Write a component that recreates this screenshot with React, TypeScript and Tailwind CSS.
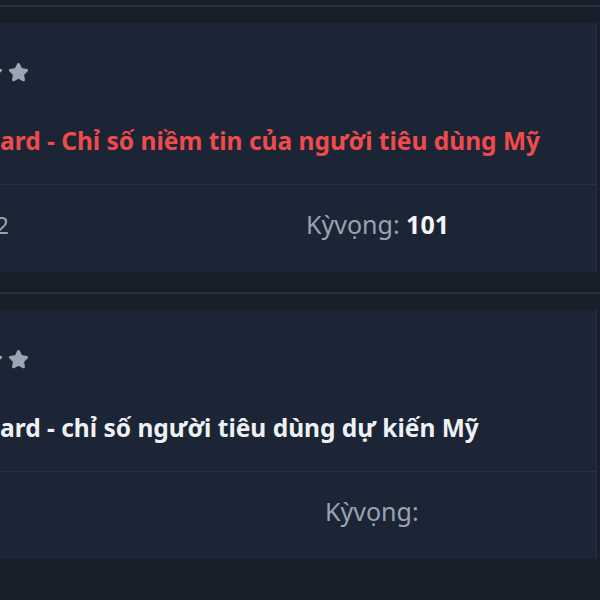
import { Star } from "lucide-react";

type Item = {
    hidden: string;
    title: string;
    red: boolean;
    prev: string;
    expect: string;
    expectX: string;
};

const items: Item[] = [
    {
        hidden: "Conference Bo",
        title: "ard - Chỉ số niềm tin của người tiêu dùng Mỹ",
        red: true,
        prev: "Trước: 102",
        expect: "101",
        expectX: "ml-[306px]",
    },
    {
        hidden: "Conference Bo",
        title: "ard - chỉ số người tiêu dùng dự kiến Mỹ",
        red: false,
        prev: "",
        expect: "",
        expectX: "ml-[325px]",
    },
];

function EventCard({ item }: { item: Item }) {
    return (
        <div className="border-t-2 border-[#283041] pt-4 pb-5">
            <div className="h-[249px] mr-[3px] flex flex-col bg-[#1b2536] border-r border-[#263245]">
                {/* header: stars + title, the left part runs off the picture */}
                <div className="h-[162px] flex flex-col border-b border-[#263143]">
                    <div className="flex items-center gap-[5px] ml-[-18px] mt-[39px]">
                        <Star size={21} className="fill-[#9ba6b2] text-[#9ba6b2]" />
                        <Star size={21} className="fill-[#9ba6b2] text-[#9ba6b2]" />
                    </div>
                    <p
                        className={
                            "relative mt-[41px] whitespace-nowrap text-[24.5px] leading-[34px] font-bold " +
                            (item.red ? "text-[#ef4b4b]" : "text-[#eef1f4]")
                        }
                    >
                        <span className="absolute right-full">{item.hidden}</span>
                        {item.title}
                    </p>
                </div>
                {/* values row */}
                <div className="flex-1 flex items-center relative pb-[8px]">
                    {item.prev && (
                        <span className="absolute inset-y-0 pb-[8px] right-[calc(100%-9px)] flex items-center text-[24px] text-[#9aa3ad] whitespace-nowrap">
                            {item.prev}
                        </span>
                    )}
                    <p className={"text-[25px] text-[#9aa3ad] " + item.expectX}>
                        Kỳvọng: <span className="font-bold text-[#f3f5f7]">{item.expect}</span>
                    </p>
                </div>
            </div>
        </div>
    );
}

export default function App() {
    return (
        <div
            className="w-[600px] h-[600px] overflow-hidden bg-[#191e2b] pt-[5px]"
            style={{ fontFamily: "'Noto Sans', Lato, sans-serif" }}
        >
            {items.map((it, i) => (
                <EventCard key={i} item={it} />
            ))}
        </div>
    );
}
